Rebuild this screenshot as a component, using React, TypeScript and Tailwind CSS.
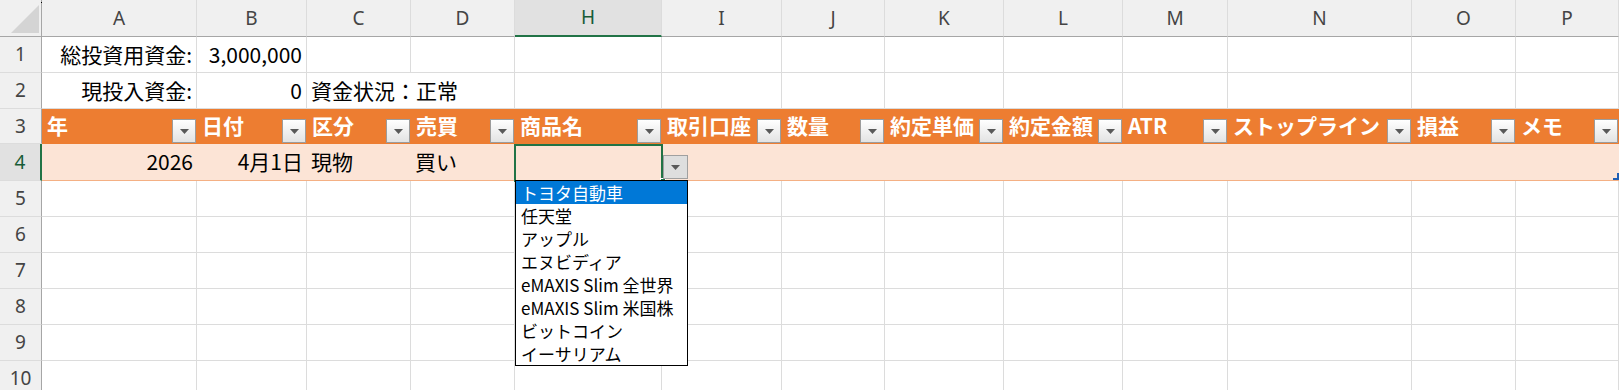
import React from 'react';

const COLS = ['A', 'B', 'C', 'D', 'H', 'I', 'J', 'K', 'L', 'M', 'N', 'O', 'P'];
const HEADERS = ['年', '日付', '区分', '売買', '商品名', '取引口座', '数量', '約定単価', '約定金額', 'ATR', 'ストップライン', '損益', 'メモ'];
const ITEMS = ['トヨタ自動車', '任天堂', 'アップル', 'エヌビディア', 'eMAXIS Slim 全世界', 'eMAXIS Slim 米国株', 'ビットコイン', 'イーサリアム'];

const jp = { fontFamily: '"Noto Sans CJK JP", "Noto Sans", sans-serif' };
const ui = { fontFamily: '"Noto Sans", "Liberation Sans", sans-serif' };

function Triangle() {
  return (
    <svg width="9" height="5" viewBox="0 0 9 5">
      <polygon points="0,0 9,0 4.5,5" fill="#595959" />
    </svg>
  );
}

function FilterButton() {
  return (
    <div className="self-end shrink-0 w-6 h-6 border border-[#9c9c9c] bg-gradient-to-b from-white to-[#e3e3e3] flex items-center justify-center">
      <Triangle />
    </div>
  );
}

function RowHead({ n, active }: { n: number; active?: boolean }) {
  return (
    <div
      style={ui}
      className={`flex items-center justify-center text-[19px] border-b border-b-[#dcdcdc] ${
        active
          ? 'bg-[#e1e1e1] text-[#185c37] border-r-2 border-r-[#217346]'
          : 'bg-[#f0f0f0] text-[#444] border-r border-r-[#a6a6a6]'
      }`}
    >
      {n}
    </div>
  );
}

function Cell({ children, align = 'left', span }: { children?: React.ReactNode; align?: 'left' | 'right'; span?: boolean }) {
  return (
    <div
      style={jp}
      className={`flex items-center whitespace-nowrap text-[21px] text-black border-r border-b border-[#dcdcdc] ${
        align === 'right' ? 'justify-end pr-1' : 'justify-start pl-1'
      } ${span ? 'col-span-2' : ''}`}
    >
      {children}
    </div>
  );
}

export default function App() {
  return (
    <div className="relative w-[1619px] h-[390px] overflow-hidden bg-white">
      <div className="grid grid-cols-[42px_155px_110px_104px_104px_147px_120px_103px_119px_119px_105px_184px_104px_103px] grid-rows-[37px_36px_36px_35px_37px_36px_36px_36px_36px_36px_36px]">
        {/* corner */}
        <div className="relative bg-[#f0f0f0] border-r border-r-[#a6a6a6] border-b border-b-[#a6a6a6]">
          <svg className="absolute left-[11px] top-[5px]" width="28" height="28" viewBox="0 0 28 28">
            <polygon points="28,0 28,28 0,28" fill="#d4d4d4" />
          </svg>
          <div className="absolute left-[41px] top-[2px] w-px h-px bg-black" />
        </div>
        {COLS.map((c) => (
          <div
            key={c}
            style={ui}
            className={`flex items-center justify-center text-[19px] border-r border-r-[#dcdcdc] ${
              c === 'H'
                ? 'bg-[#e1e1e1] text-[#185c37] border-b-2 border-b-[#217346]'
                : 'bg-[#f0f0f0] text-[#444] border-b border-b-[#a6a6a6]'
            }`}
          >
            {c}
          </div>
        ))}

        {/* row 1 */}
        <RowHead n={1} />
        <Cell align="right">総投資用資金:</Cell>
        <Cell align="right">3,000,000</Cell>
        {COLS.slice(2).map((c) => (
          <Cell key={c} />
        ))}

        {/* row 2 */}
        <RowHead n={2} />
        <Cell align="right">現投入資金:</Cell>
        <Cell align="right">0</Cell>
        <Cell span>資金状況：正常</Cell>
        {COLS.slice(4).map((c) => (
          <Cell key={c} />
        ))}

        {/* row 3: table header */}
        <RowHead n={3} />
        {HEADERS.map((h) => (
          <div
            key={h}
            style={jp}
            className="flex items-center justify-between bg-[#ed7d31] pl-[5px] pr-px pb-px"
          >
            <span className="text-[21px] font-bold text-white whitespace-nowrap">{h}</span>
            <FilterButton />
          </div>
        ))}

        {/* row 4: data */}
        <RowHead n={4} active />
        {COLS.map((c, i) => (
          <div
            key={c}
            style={jp}
            className={`relative flex items-center whitespace-nowrap text-[21px] text-black bg-[#fce4d6] border-b border-b-[#f4b084] ${
              i < 2 ? 'justify-end pr-1' : 'pl-1'
            }`}
          >
            {i === 0 && '2026'}
            {i === 1 && '4月1日'}
            {i === 2 && '現物'}
            {i === 3 && '買い'}
            {c === 'H' && (
              <>
                <div className="absolute left-[-1px] top-0 w-[149px] h-[38px] border-2 border-[#217346] z-10" />
                <div className="absolute left-[145px] top-[34px] w-[6px] h-[6px] bg-[#217346] border border-white z-20" />
                <div className="absolute left-full ml-px top-[11px] w-[25px] h-[24px] bg-[#dedede] border border-[#a0a0a0] flex items-center justify-center z-20">
                  <Triangle />
                </div>
                <div className="absolute left-0 top-full w-[173px] h-[186px] bg-white border border-black z-30 overflow-hidden">
                  {ITEMS.map((it, k) => (
                    <div
                      key={it}
                      className={`h-[23px] pl-[5px] flex items-center text-[17px] whitespace-nowrap ${
                        k === 0 ? 'bg-[#0078d7] text-white' : 'text-black'
                      }`}
                    >
                      {it}
                    </div>
                  ))}
                </div>
              </>
            )}
            {c === 'P' && (
              <svg className="absolute right-0 bottom-0" width="6" height="7" viewBox="0 0 6 7">
                <path d="M4 0h2v7H0V5h4z" fill="#1f5fb4" />
              </svg>
            )}
          </div>
        ))}

        {/* rows 5-10 */}
        {[5, 6, 7, 8, 9, 10].map((r) => (
          <React.Fragment key={r}>
            <RowHead n={r} />
            {COLS.map((c) => (
              <Cell key={c} />
            ))}
          </React.Fragment>
        ))}
      </div>
    </div>
  );
}
